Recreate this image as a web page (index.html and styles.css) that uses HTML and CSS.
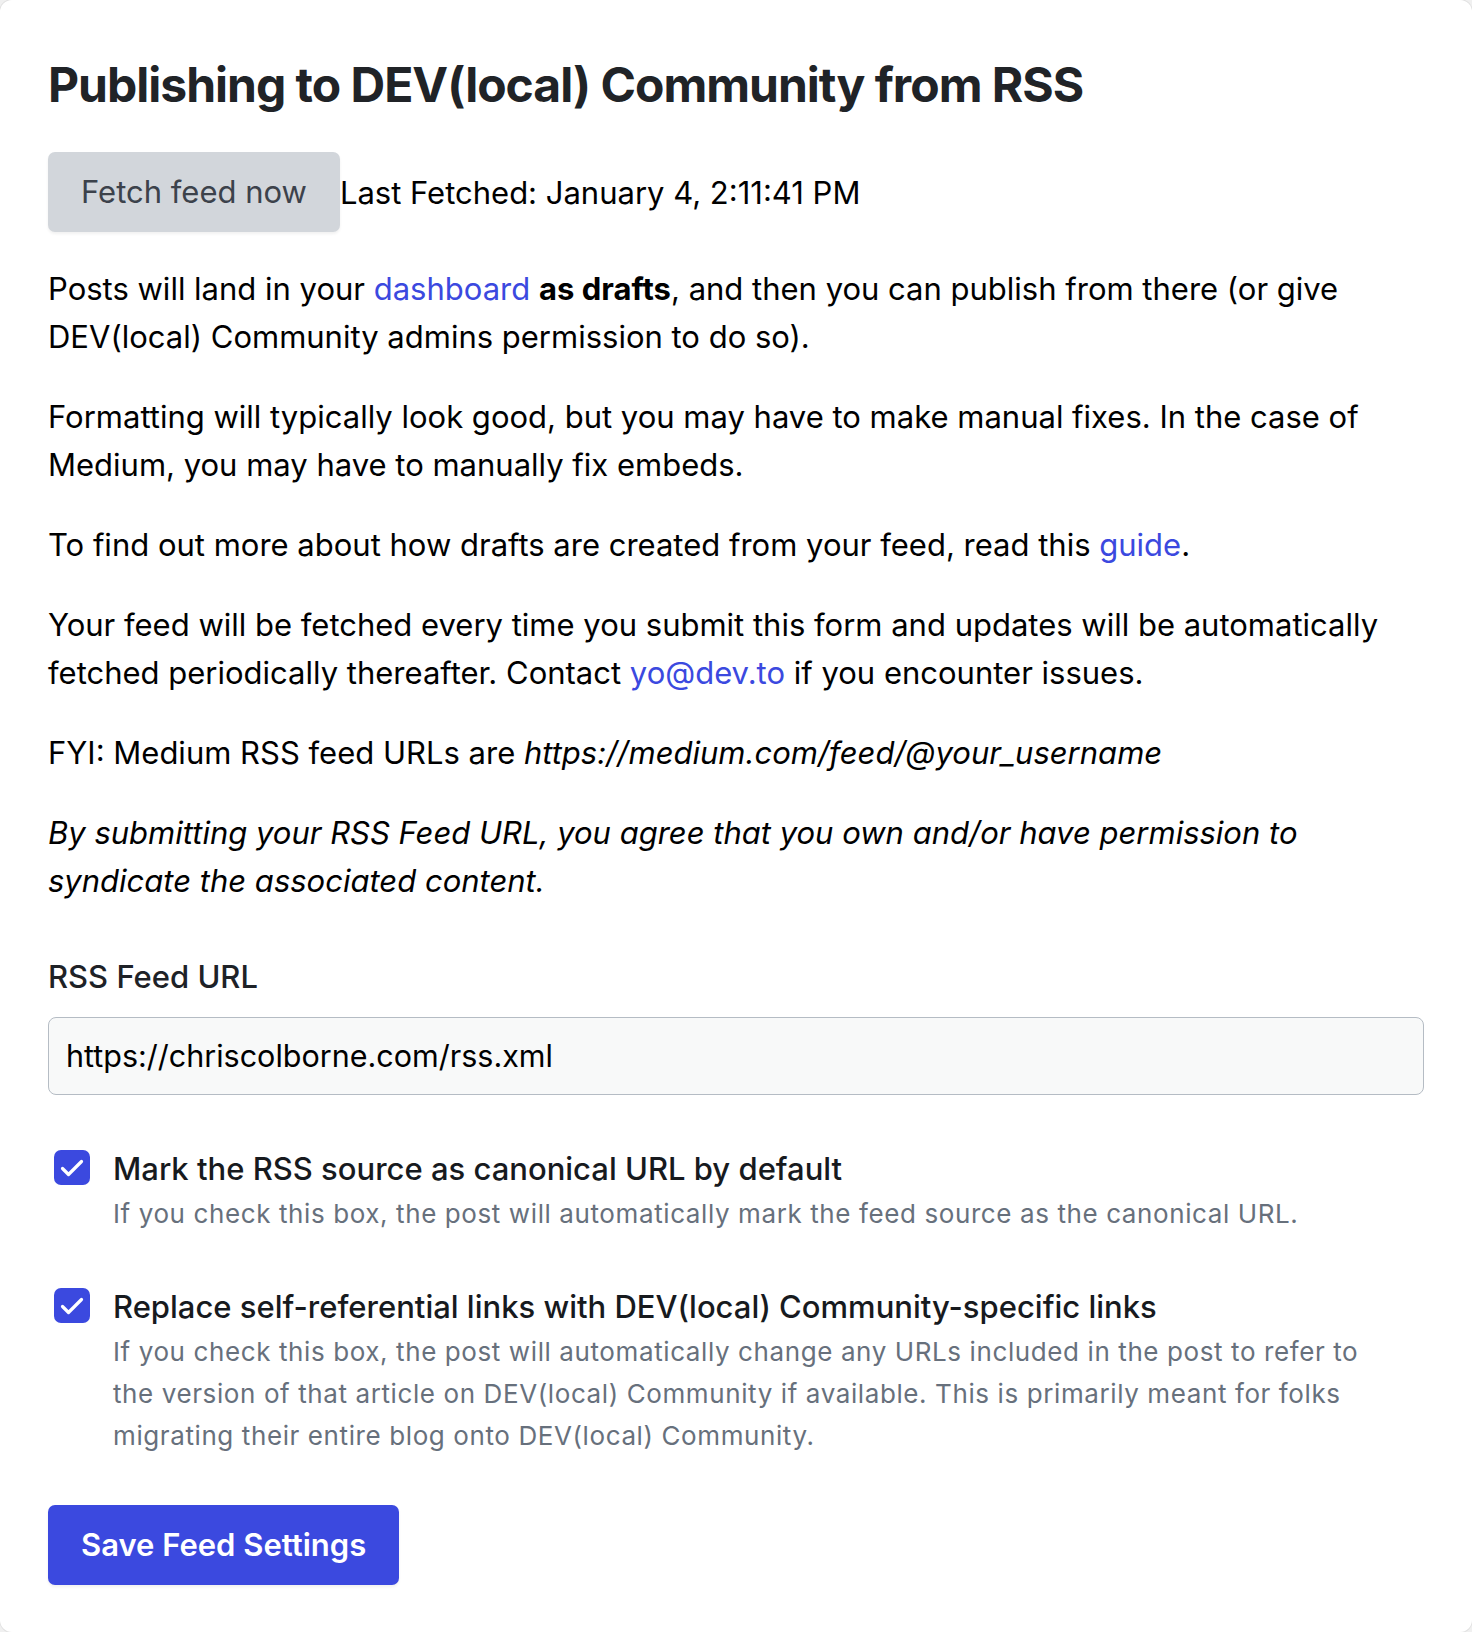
FILE: index.html
```html
<!DOCTYPE html>
<html lang="en">
<head>
    <meta charset="UTF-8">
    <title>Publishing to DEV(local) Community from RSS</title>
    <link rel="stylesheet" href="styles.css">
</head>
<body>
    <div class="card">
        <h1>Publishing to DEV(local) Community from RSS</h1>

        <div class="fetch-row">
            <button type="button" class="btn btn-secondary">Fetch feed now</button>
            <span>Last Fetched: January 4, 2:11:41 PM</span>
        </div>

        <p>Posts will land in your <a href="#">dashboard</a> <strong>as drafts</strong>, and then you can publish from there (or give DEV(local) Community admins permission to do so).</p>

        <p>Formatting will typically look good, but you may have to make manual fixes. In the case of Medium, you may have to manually fix embeds.</p>

        <p>To find out more about how drafts are created from your feed, read this <a href="#">guide</a>.</p>

        <p>Your feed will be fetched every time you submit this form and updates will be automatically fetched periodically thereafter. Contact <a href="#">yo@dev.to</a> if you encounter issues.</p>

        <p>FYI: Medium RSS feed URLs are <em>https://medium.com/feed/@your_username</em></p>

        <p><em>By submitting your RSS Feed URL, you agree that you own and/or have permission to syndicate the associated content.</em></p>

        <form>
            <div class="field">
                <label for="feed_url">RSS Feed URL</label>
                <input type="text" id="feed_url" value="https://chriscolborne.com/rss.xml">
            </div>

            <div class="check-row">
                <input type="checkbox" id="canonical" checked>
                <div class="check-text">
                    <label for="canonical">Mark the RSS source as canonical URL by default</label>
                    <p class="hint">If you check this box, the post will automatically mark the feed source as the canonical URL.</p>
                </div>
            </div>

            <div class="check-row">
                <input type="checkbox" id="referential" checked>
                <div class="check-text">
                    <label for="referential">Replace self-referential links with DEV(local) Community-specific links</label>
                    <p class="hint">If you check this box, the post will automatically change any URLs included in the post to refer to the version of that article on DEV(local) Community if available. This is primarily meant for folks migrating their entire blog onto DEV(local) Community.</p>
                </div>
            </div>

            <button type="submit" class="btn btn-primary">Save Feed Settings</button>
        </form>
    </div>
</body>
</html>
```

FILE: styles.css
```css
body {
    margin: 0;
    background: #f0f0f0;
    font-family: Inter, "Liberation Sans", sans-serif;
}
.card {
    background: #fff;
    min-height: 1632px;
    box-sizing: border-box;
    border-radius: 12px;
    box-shadow: 0 0 0 1px rgba(0, 0, 0, 0.06);
    padding: 54px 48px 40px;
}
h1 {
    margin: 0 0 36px;
    font-size: 48px;
    line-height: 62px;
    font-weight: 700;
    color: #202327;
    letter-spacing: -1px;
}
p {
    margin: 0 0 32px;
    font-size: 31px;
    line-height: 48px;
    color: #000;
}
a {
    color: #3b49df;
    text-decoration: none;
}
strong {
    font-weight: 700;
}
.btn {
    font-family: inherit;
    font-size: 31px;
    line-height: 48px;
    padding: 16px 33px;
    border: none;
    border-radius: 7px;
    cursor: pointer;
}
.btn-secondary {
    background: #d2d6db;
    color: #3c424b;
    box-shadow: 0 2px 3px rgba(0, 0, 0, 0.06);
}
.btn-primary {
    margin-top: 48px;
    background: #3b49df;
    color: #fff;
    font-weight: 600;
    box-shadow: 0 2px 3px rgba(0, 0, 0, 0.06);
}
/* Fetch button with the last fetched time beside it */
.fetch-row {
    display: flex;
    align-items: center;
    margin-bottom: 33px;
    font-size: 31px;
    color: #000;
}
form {
    margin-top: 48px;
}
.field label {
    display: block;
    font-size: 31px;
    font-weight: 500;
    line-height: 48px;
    color: #1e2227;
    margin-bottom: 16px;
}
.field input {
    display: block;
    width: 100%;
    box-sizing: border-box;
    font-family: inherit;
    font-size: 30.5px;
    line-height: 48px;
    padding: 14px 17px;
    border: 1px solid #b5bcc4;
    border-radius: 8px;
    background: #f8f9f9;
    color: #000;
}
/* Checkbox rows */
.check-row {
    display: flex;
    gap: 23px;
    margin-top: 50px;
    padding-left: 6px;
}
.check-row + .check-row {
    margin-top: 48px;
}
.check-row input {
    appearance: none;
    flex: none;
    width: 36px;
    height: 35px;
    margin: 5px 0 0;
    border-radius: 7px;
    background: #3b49df url("data:image/svg+xml,%3Csvg xmlns='http://www.w3.org/2000/svg' viewBox='0 0 36 35'%3E%3Cpath d='M8.5 18.5L14.5 24.5L27.5 11.5' fill='none' stroke='white' stroke-width='3.2' stroke-linecap='round' stroke-linejoin='round'/%3E%3C/svg%3E") no-repeat center / 100% 100%;
}
.check-text {
    padding-right: 40px;
}
.check-row label {
    display: block;
    font-size: 31px;
    font-weight: 500;
    line-height: 48px;
    color: #171a1e;
}
.hint {
    margin: 0;
    font-size: 26px;
    line-height: 42px;
    letter-spacing: 0.6px;
    color: #67707c;
}
```
